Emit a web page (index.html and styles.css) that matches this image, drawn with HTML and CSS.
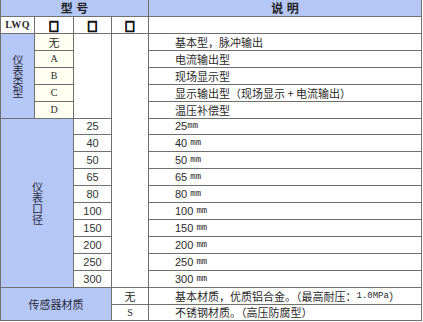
FILE: index.html
```html
<!DOCTYPE html>
<html lang="zh">
<head>
<meta charset="utf-8">
<link rel="stylesheet" href="styles.css">
</head>
<body>
<div class="spec">
  <div class="cell head span4">型 号</div>
  <div class="cell head">说 明</div>

  <div class="cell code">LWQ</div>
  <div class="cell box"><span class="sq">□</span></div>
  <div class="cell box"><span class="sq">□</span></div>
  <div class="cell box"><span class="sq">□</span></div>
  <div class="cell desc"></div>

  <div class="cell group rows5"><span class="vt">仪表类型</span></div>
  <div class="cell opt cjk">无</div>
  <div class="cell blank rows5"></div>
  <div class="cell blank rows15"></div>
  <div class="cell desc">基本型，脉冲输出</div>

  <div class="cell opt">A</div>
  <div class="cell desc">电流输出型</div>
  <div class="cell opt">B</div>
  <div class="cell desc">现场显示型</div>
  <div class="cell opt">C</div>
  <div class="cell desc">显示输出型（现场显示 + 电流输出）</div>
  <div class="cell opt">D</div>
  <div class="cell desc">温压补偿型</div>

  <div class="cell group span2 rows10"><span class="vt">仪表口径</span></div>
  <div class="cell num">25</div>
  <div class="cell desc"><span class="n">25</span><span class="mm">mm</span></div>
  <div class="cell num">40</div>
  <div class="cell desc"><span class="n">40 </span><span class="mm">mm</span></div>
  <div class="cell num">50</div>
  <div class="cell desc"><span class="n">50 </span><span class="mm">mm</span></div>
  <div class="cell num">65</div>
  <div class="cell desc"><span class="n">65 </span><span class="mm">mm</span></div>
  <div class="cell num">80</div>
  <div class="cell desc"><span class="n">80 </span><span class="mm">mm</span></div>
  <div class="cell num">100</div>
  <div class="cell desc"><span class="n">100 </span><span class="mm">mm</span></div>
  <div class="cell num">150</div>
  <div class="cell desc"><span class="n">150 </span><span class="mm">mm</span></div>
  <div class="cell num">200</div>
  <div class="cell desc"><span class="n">200 </span><span class="mm">mm</span></div>
  <div class="cell num">250</div>
  <div class="cell desc"><span class="n">250 </span><span class="mm">mm</span></div>
  <div class="cell num">300</div>
  <div class="cell desc"><span class="n">300 </span><span class="mm">mm</span></div>

  <div class="cell group span3 rows2">传感器材质</div>
  <div class="cell plain cjk">无</div>
  <div class="cell desc">基本材质，优质铝合金。（最高耐压：<span class="mono">1.0MPa</span>）</div>
  <div class="cell plain">S</div>
  <div class="cell desc">不锈钢材质。（高压防腐型）</div>
</div>
</body>
</html>
```

FILE: styles.css
```css
html, body {
  margin: 0;
  padding: 0;
  background: #ffffff;
}

.spec {
  display: grid;
  width: 422px;
  box-sizing: border-box;
  grid-template-columns: 33px 38px 37px 36px 272px;
  grid-template-rows: 16px 16px 16px 16px 16px 16px 16px 15px 16px 16px 16px 16px 16px 16px 16px 16px 16px 16px 15px;
  gap: 1px;
  padding: 0 1px 1px 1px;
  background: #707070;
  font-family: "Noto Sans CJK SC", sans-serif;
  font-size: 11px;
  color: #2a2a2a;
}

.cell {
  display: flex;
  align-items: center;
  justify-content: center;
  background: #ffffff;
  line-height: 1;
  white-space: nowrap;
  overflow: hidden;
}

.span2 { grid-column: span 2; }
.span3 { grid-column: span 3; }
.span4 { grid-column: span 4; }
.rows2 { grid-row: span 2; }
.rows5 { grid-row: span 5; }
.rows10 { grid-row: span 10; }
.rows15 { grid-row: span 15; }

.head {
  background: #b5c7f7;
  font-weight: 700;
  font-size: 12px;
  color: #222;
  word-spacing: 1px;
}

.code {
  font-family: "Liberation Serif", serif;
  font-weight: 700;
  font-size: 10px;
  letter-spacing: 0.3px;
}

.sq {
  display: inline-block;
  font-family: "DejaVu Sans", sans-serif;
  font-size: 11px;
  font-weight: 700;
  -webkit-text-stroke: 1px #111;
  color: #111;
  transform: scaleY(1.2);
}

.group {
  background: #b5c7f7;
  color: #2a2a3a;
}

.vt {
  writing-mode: vertical-rl;
  line-height: 11px;
}

.opt {
  background: #fffff2;
  font-family: "Liberation Serif", serif;
  font-size: 10px;
}

.opt.cjk, .plain.cjk {
  font-family: "Noto Sans CJK SC", sans-serif;
  font-size: 11px;
}

.plain {
  font-family: "Liberation Serif", serif;
  font-size: 10px;
}

.num {
  font-family: "Liberation Sans", sans-serif;
  font-size: 11px;
  color: #333;
}

.desc {
  justify-content: flex-start;
  padding-left: 26px;
}

.n {
  font-family: "Liberation Sans", sans-serif;
  font-size: 11px;
  white-space: pre;
}

.mm, .mono {
  font-family: "Liberation Mono", monospace;
  font-size: 9px;
}
```
